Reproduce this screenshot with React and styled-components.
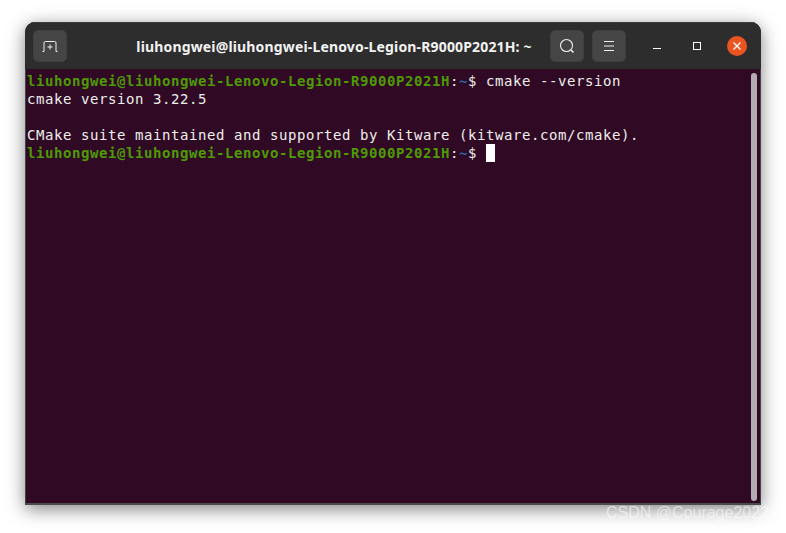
import React from "react";
import styled, { createGlobalStyle } from "styled-components";

const GlobalStyle = createGlobalStyle`
  html, body {
    margin: 0;
    padding: 0;
    background: #ffffff;
    overflow: hidden;
  }
`;

const Page = styled.div`
  position: relative;
  width: 786px;
  height: 533px;
  padding: 22px 25px 28px;
  box-sizing: border-box;
  overflow: hidden;
`;

const Window = styled.div`
  width: 736px;
  height: 483px;
  display: flex;
  flex-direction: column;
  border-radius: 10px 10px 0 0;
  overflow: hidden;
  background: #300a24;
  box-shadow: 0 4px 18px rgba(0, 0, 0, 0.5);
`;

const HeaderBar = styled.div`
  height: 47px;
  flex: none;
  display: flex;
  align-items: center;
  padding: 0 14px 0 8px;
  box-sizing: border-box;
  background: #2d2d2d;
  border-top: 1px solid #3c3c3c;
`;

const HeaderButton = styled.div`
  width: 34px;
  height: 32px;
  flex: none;
  display: flex;
  align-items: center;
  justify-content: center;
  box-sizing: border-box;
  margin-left: ${(p) => p.$gap || 0}px;
  background: #454545;
  border: 1px solid #404040;
  border-radius: 5px;
`;

const Title = styled.div`
  flex: 1;
  text-align: center;
  padding-left: 51px;
  color: #f2f2f2;
  font-family: "Noto Sans", sans-serif;
  font-weight: 700;
  font-size: 14px;
  letter-spacing: 0.16px;
  white-space: nowrap;
`;

const WindowControl = styled.div`
  width: 20px;
  height: 20px;
  flex: none;
  display: flex;
  align-items: center;
  justify-content: center;
  margin-left: ${(p) => p.$gap}px;
  border-radius: 50%;
  background: ${(p) => (p.$close ? "#e95420" : "transparent")};
`;

const TerminalBody = styled.div`
  flex: 1;
  display: flex;
  min-height: 0;
  border-left: 1px solid #444244;
  border-right: 1px solid #444244;
  border-bottom: 2px solid #4d4a4c;
`;

const Output = styled.div`
  flex: 1;
  padding: 3px 0 0 1px;
  font-family: "DejaVu Sans Mono", monospace;
  font-size: 14px;
  line-height: 18px;
  letter-spacing: 0.57px;
  color: #eeeeec;
`;

const Line = styled.div`
  height: 18px;
  white-space: pre;
`;

const Green = styled.span`
  color: #4e9a06;
  font-weight: 700;
`;

const Blue = styled.span`
  color: #3465a4;
  font-weight: 700;
`;

const Cursor = styled.span`
  display: inline-block;
  width: 9px;
  height: 18px;
  vertical-align: top;
  background: #ffffff;
`;

const ScrollTrack = styled.div`
  width: 6px;
  flex: none;
  padding: 4px 3px 2px 0;
  display: flex;
`;

const ScrollThumb = styled.div`
  flex: 1;
  border-radius: 3px;
  background: #b3adb1;
`;

const Watermark = styled.div`
  position: absolute;
  left: 606px;
  top: 503px;
  font-family: "Liberation Sans", sans-serif;
  font-size: 16px;
  line-height: 20px;
  color: rgba(255, 255, 255, 0.55);
  white-space: nowrap;
`;

const Prompt = () => (
  <>
    <Green>liuhongwei@liuhongwei-Lenovo-Legion-R9000P2021H</Green>
    <span>:</span>
    <Blue>~</Blue>
    <span>$ </span>
  </>
);

export default function App() {
  return (
    <Page>
      <GlobalStyle />
      <Window>
        <HeaderBar>
          <HeaderButton>
            <svg width="16" height="16" viewBox="0 0 16 16" fill="none" stroke="#eeeeee" strokeWidth="1">
              <path d="M0.5 13.5h1.5V5q0-1.5 1.5-1.5h9q1.5 0 1.5 1.5v8.5h1.5" />
              <path d="M8 6.5v5M5.5 9h5" />
            </svg>
          </HeaderButton>
          <Title>liuhongwei@liuhongwei-Lenovo-Legion-R9000P2021H: ~</Title>
          <HeaderButton>
            <svg width="16" height="16" viewBox="0 0 16 16" fill="none" stroke="#eeeeee">
              <circle cx="7.5" cy="7.5" r="6" strokeWidth="1.1" />
              <path d="M12 12l2.5 2.5" strokeWidth="1.6" />
            </svg>
          </HeaderButton>
          <HeaderButton $gap={8}>
            <svg width="14" height="12" viewBox="0 0 14 12" stroke="#eeeeee" strokeWidth="1">
              <path d="M2 1.5h10M2 6h10M2 10.5h10" />
            </svg>
          </HeaderButton>
          <WindowControl $gap={21}>
            <svg width="10" height="10" viewBox="0 0 10 10" stroke="#ffffff" strokeWidth="1">
              <path d="M1 7.5h8" />
            </svg>
          </WindowControl>
          <WindowControl $gap={20}>
            <svg width="10" height="10" viewBox="0 0 10 10" fill="none" stroke="#ffffff" strokeWidth="1">
              <rect x="1.5" y="1.5" width="7" height="7" />
            </svg>
          </WindowControl>
          <WindowControl $gap={20} $close>
            <svg width="10" height="10" viewBox="0 0 10 10" stroke="#ffffff" strokeWidth="1.4">
              <path d="M1.5 1.5l7 7M8.5 1.5l-7 7" />
            </svg>
          </WindowControl>
        </HeaderBar>
        <TerminalBody>
          <Output>
            <Line>
              <Prompt />
              cmake --version
            </Line>
            <Line>cmake version 3.22.5</Line>
            <Line> </Line>
            <Line>CMake suite maintained and supported by Kitware (kitware.com/cmake).</Line>
            <Line>
              <Prompt />
              <Cursor />
            </Line>
          </Output>
          <ScrollTrack>
            <ScrollThumb />
          </ScrollTrack>
        </TerminalBody>
      </Window>
      <Watermark>CSDN @Courage2022</Watermark>
    </Page>
  );
}
